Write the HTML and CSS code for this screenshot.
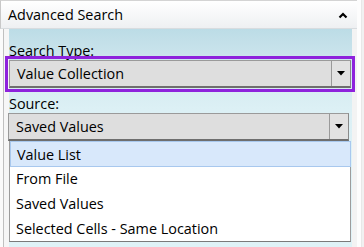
FILE: index.html
```html
<!DOCTYPE html>
<html>
<head>
<meta charset="utf-8">
<link rel="stylesheet" href="styles.css">
</head>
<body>
<div class="frame">
  <div class="main">
    <div class="header">
      <span class="title">Advanced Search</span>
      <svg class="chev" width="10" height="7" viewBox="0 0 10 7"><polyline points="1.5,5.5 5,2 8.5,5.5" fill="none" stroke="#000" stroke-width="2.2"/></svg>
    </div>
    <div class="body">
      <div class="lstrip"></div>
      <div class="content">
        <div class="label">Search Type:</div>
        <div class="combo hl">
          <span class="ctext">Value Collection</span>
          <span class="btn"><svg width="8" height="5" viewBox="0 0 8 5"><polygon points="0,0 8,0 4,4.5" fill="#000"/></svg></span>
        </div>
        <div class="label l2">Source:</div>
        <div class="combo c2">
          <span class="ctext">Saved Values</span>
          <span class="btn"><svg width="8" height="5" viewBox="0 0 8 5"><polygon points="0,0 8,0 4,4.5" fill="#000"/></svg></span>
        </div>
        <div class="list">
          <div class="item sel">Value List</div>
          <div class="item">From File</div>
          <div class="item">Saved Values</div>
          <div class="item">Selected Cells - Same Location</div>
        </div>
      </div>
    </div>
  </div>
  <div class="rstrip"></div>
</div>
</body>
</html>
```

FILE: styles.css
```css
* { box-sizing: border-box; }
html, body { margin: 0; padding: 0; }
body {
  width: 364px; height: 247px; overflow: hidden;
  font-family: "Open Sans", "Noto Sans", sans-serif;
  font-size: 14.4px; color: #000;
  background: #f3f3f3;
}
.frame { display: flex; height: 247px; }
.main { width: 357px; display: flex; flex-direction: column; }
.header {
  height: 29px;
  display: flex; align-items: center; justify-content: space-between;
  padding: 0 9px 0 7px;
  background: linear-gradient(#ffffff, #eef0f2);
  border-top: 1px solid #d4d4d4;
  border-left: 1px solid #c8c8c8;
  border-bottom: 1px solid #d8dcdf;
}
.chev { display: block; margin-top: 1px; }
.body { flex: 1; display: flex; }
.lstrip {
  width: 9px;
  background: #f6f6f6;
  border-left: 3px solid #fbfbfb;
  box-shadow: inset 1px 0 0 #c0c0c0;
}
.content {
  width: 343px;
  background: linear-gradient(#bcdce6 0px, #d2e8ef 40px, #dcf0f5 80px, #dff2f7 100%);
  padding-top: 12px;
  display: flex; flex-direction: column;
}
.label { height: 19px; line-height: 19px; }
.l2 { margin-top: 6px; }
.combo {
  height: 28px; width: 342px;
  display: flex; align-items: center; justify-content: space-between;
  background: #dedede;
  border: 1px solid #9a9a9a;
  border-bottom: 2px solid #6e6e6e;
  border-right: 1px solid #8a8a8a;
}
.hl { outline: 3px solid #8e22dc; outline-offset: 1px; }
.c2 { width: 341px; margin-left: -1px; }
.ctext { padding-left: 7px; }
.btn {
  width: 19px; height: 100%;
  display: flex; align-items: center; justify-content: center;
  border-left: 1px solid #9a9a9a;
  background: #e2e2e2;
}
.list {
  width: 342px; height: 101px;
  background: #fff;
  border: 1px solid #9c9c9c;
  border-top: none;
  border-bottom: 1px solid #7a7a7a;
  padding-top: 2px;
}
.item {
  height: 25px; line-height: 24px;
  padding-left: 6px;
}
.sel {
  height: 26px;
  background: #d8e8fb;
  border: 1px solid #a8c8ee;
  margin-top: -2px;
  padding-top: 1px;
  margin-right: -1px;
}
.rstrip {
  flex: 1;
  background: #f1f1f1;
  border-left: 4px solid #fdfdfd;
  box-shadow: inset 1px 0 0 #e8e8e8;
}
```
